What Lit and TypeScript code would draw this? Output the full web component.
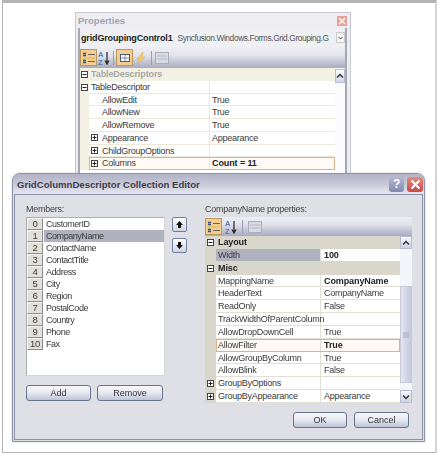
import { LitElement, html, css } from "lit";
import { customElement } from "lit/decorators.js";

const exp = (plus = true) => html`<svg class="ex" width="7" height="7" viewBox="0 0 7 7"><rect x=".5" y=".5" width="6" height="6" fill="#fff" stroke="#444"/><path d="M1.5 3.5h4${plus ? "M3.5 1.5v4" : ""}" stroke="#222"/></svg>`;
const catIcon = html`<svg width="14" height="14" viewBox="0 0 14 14"><path d="M1 2.5h3M1 4.5h3M1 9.5h3M1 11.5h3" stroke="#35507a" stroke-width="1.5"/><path d="M6 3.5h7M6 10.5h7" stroke="#666"/><path d="M1 7h12" stroke="#d8b860"/></svg>`;
const azIcon = html`<svg width="12" height="16" viewBox="0 0 12 16"><text x="0" y="7" class="az" fill="#5a7cb8">A</text><text x="0" y="15" class="az" fill="#5a7cb8">Z</text><path d="M9 2v11M7 10.5l2 3.5 2-3.5" stroke="#222" fill="none" stroke-width="1.2"/></svg>`;
const pageIcon = html`<svg width="14" height="14" viewBox="0 0 14 14"><rect x=".5" y="1.5" width="13" height="11" fill="#d8dae4" stroke="#a8adba"/><path d="M2 5h10M2 8h10" stroke="#b8bcc8"/></svg>`;
const gridIcon = html`<svg width="14" height="14" viewBox="0 0 14 14"><rect x="2.5" y="3.5" width="9" height="7" fill="#fff" stroke="#4a5a7a"/><path d="M2.5 7h9M7 3.5v7" stroke="#7a8aa8"/></svg>`;
const boltIcon = html`<svg width="14" height="16" viewBox="0 0 14 16"><path d="M10 2 4 9h3l-2 5 7-7H9z" fill="#f0d060" stroke="#e0a860" stroke-width=".6"/></svg>`;
const xIcon = html`<svg width="11" height="11" viewBox="0 0 11 11"><path d="M1.5 1.5l8 8M9.5 1.5l-8 8" stroke="#fff" stroke-width="2"/></svg>`;
const chev = (up: boolean) => html`<svg width="8" height="6" viewBox="0 0 8 6"><path d="${up ? "M1 4.5l3-3 3 3" : "M1 1.5l3 3 3-3"}" stroke="#333" stroke-width="1.5" fill="none"/></svg>`;

const members = ["CustomerID","CompanyName","ContactName","ContactTitle","Address","City","Region","PostalCode","Country","Phone","Fax"];

type Row = { k: string; v?: string; kind?: string; bold?: boolean; icon?: "plus" | "minus" };
const descRows: Row[] = [
  { k: "TableDescriptors", kind: "head", icon: "minus" },
  { k: "TableDescriptor", v: "", kind: "top", icon: "minus" },
  { k: "AllowEdit", v: "True", kind: "deep" },
  { k: "AllowNew", v: "True", kind: "deep" },
  { k: "AllowRemove", v: "True", kind: "deep" },
  { k: "Appearance", v: "Appearance", kind: "sub" },
  { k: "ChildGroupOptions", v: "", kind: "sub" },
  { k: "Columns", v: "Count = 11", kind: "sub hot", bold: true },
];
const propRows: Row[] = [
  { k: "Layout", kind: "head", icon: "minus" },
  { k: "Width", v: "100", kind: "sel", bold: true },
  { k: "Misc", kind: "head", icon: "minus" },
  { k: "MappingName", v: "CompanyName", bold: true },
  { k: "HeaderText", v: "CompanyName" },
  { k: "ReadOnly", v: "False" },
  { k: "TrackWidthOfParentColumn", v: "" },
  { k: "AllowDropDownCell", v: "True" },
  { k: "AllowFilter", v: "True", bold: true, kind: "hot" },
  { k: "AllowGroupByColumn", v: "True" },
  { k: "AllowBlink", v: "False" },
  { k: "GroupByOptions", v: "", icon: "plus" },
  { k: "GroupByAppearance", v: "Appearance", icon: "plus" },
];

const row = (r: Row, sub = false) => {
  const icon = r.icon ? exp(r.icon === "plus") : "";
  return r.kind === "head"
    ? html`<div class="row head"><div class="mg">${icon}</div><div class="nm">${r.k}</div></div>`
    : html`<div class="row ${r.kind ?? ""}"><div class="mg">${icon}</div><div class="cells"><div class="nm">${sub ? exp(true) : ""}<span>${r.k}</span></div><div class="vl ${r.bold ? "b" : ""}">${r.v}</div></div></div>`;
};

@customElement("app-root")
export class AppRoot extends LitElement {
  static styles = css`
    :host { display: block; width: 438px; height: 456px; overflow: hidden; font-family: "Liberation Sans", Arial, sans-serif; font-size: 9px; letter-spacing: -.25px; color: #3a3a3a; background: #fff; }
    svg { display: block; flex: none; }
    .az { font: bold 7.5px "Liberation Sans", sans-serif; letter-spacing: 0; }
    .page { filter: blur(.3px); margin-left: 2px; width: 435px; height: 453px; box-sizing: border-box; border: solid #b4b4b4; border-width: 3px 2px 1px 1px; border-right-color: #d4d4d4; }

    .props { margin: 9px 0 0 72px; width: 276px; height: 161px; box-sizing: border-box; border: 1px solid #c8c8d2; border-bottom: none; background: #eeeef2; display: flex; flex-direction: column; }
    .ptitle { height: 15px; flex: none; display: flex; align-items: center; justify-content: space-between; padding: 0 3px 0 2px; font-weight: bold; font-size: 9.5px; letter-spacing: 0; color: #a2a4ac; }
    .pclose { width: 10px; height: 10px; background: #e8a096; display: flex; align-items: center; justify-content: center; }
    .pclose svg { width: 8px; height: 8px; }
    .pbody { flex: 1; min-height: 0; border: solid #a6a8b4; border-width: 0 2px; background: #fff; margin: 0 3px 0 2px; display: flex; flex-direction: column; }
    .combo { height: 19px; flex: none; display: flex; align-items: center; gap: 5px; padding-left: 1px; background: #eef0f4; white-space: nowrap; overflow: hidden; position: relative; }
    .combo b { color: #222; letter-spacing: -.15px; }
    .combo span { color: #555; font-size: 8.4px; letter-spacing: -.4px; }
    .ddl { position: absolute; right: 0; top: 4px; width: 9px; height: 11px; background: #f4f4f4; border: 1px solid #ccc; box-sizing: border-box; display: flex; align-items: center; justify-content: center; }
    .ddl svg { width: 5px; height: 4px; }
    .tb { height: 21px; flex: none; display: flex; align-items: center; background: linear-gradient(#eeeef4, #e4e4ec 40%, #a8aabe); }
    .tb i, .rtb i { width: 1px; height: 14px; background: #9a9cb0; flex: none; }
    .tb .ic1 { margin-left: 1px; }
    .tb .s1 { margin: 0 2px 0 3px; }
    .tb .s2 { margin: 0 3px 0 4px; }
    .on { width: 17px; height: 17px; box-sizing: border-box; flex: none; background: #f6cd90; border: 1px solid #b89860; display: flex; align-items: center; justify-content: center; }
    .on svg { width: 14px; height: 14px; }
    .pgrid { flex: 1; min-height: 0; display: flex; }
    .pcols { flex: 1; min-width: 0; --m: 9px; --n: 121px; --h: 12.75px; --line: #ece9d8; --pale: #f3f1e4; --pad: 2px; --vp: 2px; }
    .psb { width: 10px; flex: none; background: #fbfbfd; }
    .sbtn { height: 12px; margin-top: 1px; border: 1px solid #b8bcd0; background: linear-gradient(#fff, #d0d4e4); display: flex; align-items: center; justify-content: center; }

    .row { height: var(--h); display: flex; white-space: nowrap; line-height: 12px; background: var(--pale); }
    .mg { width: var(--m); flex: none; display: flex; align-items: center; justify-content: center; }
    .cells { flex: 1; min-width: 0; display: grid; grid-template-columns: var(--n) 1fr; background: #fff; box-sizing: border-box; border-bottom: 1px solid var(--line); }
    .nm { display: flex; align-items: center; gap: 4px; padding-left: var(--pad); border-right: 1px solid var(--line); }
    .vl { padding-left: var(--vp); display: flex; align-items: center; }
    .b { font-weight: bold; color: #222; letter-spacing: -.1px; }
    .head .nm { font-weight: bold; letter-spacing: -.1px; border: none; padding-left: var(--pad); }
    .pcols .head .nm { color: #a8a8a8; }
    .deep .nm { padding-left: 13px; }
    .sub .nm { padding-left: 2px; }
    .hot .cells { outline: 1px solid #dfb08a; outline-offset: -1px; background: #fffaf4; }

    .dlg { margin-left: 9px; width: 413px; height: 269px; box-sizing: border-box; border: 1px solid #8f93a8; border-radius: 8px 8px 0 0; background: #dfe0e6; box-shadow: 0 0 2px #bbb; display: flex; flex-direction: column; }
    .dtitle { height: 20px; flex: none; display: flex; align-items: center; justify-content: space-between; padding: 0 1px 0 4px; border-radius: 7px 7px 0 0; background: linear-gradient(#b0b2c6, #c8c9d8 50%, #e6e6ee); }
    .dtitle b { font-size: 9.6px; letter-spacing: 0; color: #3c3e4c; }
    .wbtns { display: flex; gap: 3px; }
    .wb { width: 15px; height: 15px; border-radius: 3px; display: flex; align-items: center; justify-content: center; color: #fff; font: bold 12px "Liberation Sans", sans-serif; }
    .help { background: linear-gradient(#b4bad4, #8088ae); }
    .close { width: 16px; background: linear-gradient(#e88a80, #c64a48); }
    .dbody { flex: 1; min-height: 0; margin: 0 1px 1px; border: 1px solid #8e92a8; display: grid; grid-template-columns: 139px 40px 207px; grid-template-rows: 14px 1fr; padding: 8px 10px 0 11px; }
    .lbl { color: #444; line-height: 12px; }
    .left, .right { display: flex; flex-direction: column; }
    .list { height: 159px; box-sizing: border-box; background: #fff; border: 1px solid #b0b0b0; border-right-color: #d8d8d8; border-bottom-color: #d8d8d8; }
    .m { height: 12px; display: flex; align-items: center; gap: 1px; }
    .m u { width: 16px; height: 12px; box-sizing: border-box; text-decoration: none; text-align: center; line-height: 10px; background: #e2e0d8; border: 1px solid; border-color: #f4f4f4 #8c8c8c #8c8c8c #f4f4f4; font-size: 9.5px; flex: none; }
    .m span { flex: 1; line-height: 12px; padding-left: 2px; letter-spacing: -.45px; }
    .m.sel span { background: #b0b2c0; }
    .btns { display: flex; gap: 6px; margin-top: 9px; }
    .btn { height: 16px; box-sizing: border-box; border: 1px solid #66768f; border-radius: 3px; background: linear-gradient(#f8f9fc, #e6e8f0 50%, #bcc5d8); text-align: center; line-height: 14px; letter-spacing: 0; color: #333; }
    .add { width: 65px; }
    .rem { width: 66px; }
    .okb { width: 54px; }
    .can { width: 55px; }
    .arrows { display: flex; flex-direction: column; gap: 6px; padding-left: 7px; }
    .ar { width: 15px; height: 15px; box-sizing: border-box; border: 1px solid #7080a0; border-radius: 2px; background: linear-gradient(#fff, #cfd4e2); display: flex; align-items: center; justify-content: center; }
    .rgrid { height: 186px; display: flex; flex-direction: column; background: #d9d6cc; }
    .rtb { height: 19px; flex: none; display: flex; align-items: center; background: linear-gradient(#eeeff5, #e0e1ea 40%, #a8aac0); }
    .rtb .az2 { margin-left: 3px; }
    .rtb i { margin: 0 5px; }
    .rbody { flex: 1; min-height: 0; display: flex; }
    .rcols { flex: 1; min-width: 0; --m: 11px; --n: 105px; --h: 12.85px; --line: #e2e0d6; --pale: #d9d6cc; --pad: 2px; --vp: 3px; }
    .rcols .head .nm { color: #222; }
    .sel .cells { border-bottom-color: #d9d6cc; }
    .sel .nm { background: #b0b2c0; }
    .rsb { width: 12px; flex: none; background: #f4f5fa; display: flex; flex-direction: column; }
    .thumb { margin: 37px 0 7px; flex: 1; background: linear-gradient(90deg, #e4e6f2, #c4c8dc); border: 1px solid #c8cad8; display: flex; align-items: center; justify-content: center; }
    .sb2 { height: 13px; box-sizing: border-box; flex: none; border: 1px solid #b8bcd0; background: linear-gradient(#f8f8fc, #cdd1e2); display: flex; align-items: center; justify-content: center; }
    .ok { display: flex; justify-content: flex-end; gap: 7px; margin-top: 9px; padding-right: 3px; }
  `;

  render() {
    return html`<div class="page">
      <div class="props">
        <div class="ptitle"><span>Properties</span><div class="pclose">${xIcon}</div></div>
        <div class="pbody">
          <div class="combo"><b>gridGroupingControl1</b><span>Syncfusion.Windows.Forms.Grid.Grouping.G</span><div class="ddl">${chev(false)}</div></div>
          <div class="tb"><div class="on">${catIcon}</div><div class="ic1">${azIcon}</div><i class="s1"></i><div class="on">${gridIcon}</div>${boltIcon}<i class="s2"></i>${pageIcon}</div>
          <div class="pgrid">
            <div class="pcols">${descRows.map((r) => row(r, (r.kind ?? "").startsWith("sub")))}</div>
            <div class="psb"><div class="sbtn">${chev(true)}</div></div>
          </div>
        </div>
      </div>
      <div class="dlg">
        <div class="dtitle"><b>GridColumnDescriptor Collection Editor</b><div class="wbtns"><div class="wb help">?</div><div class="wb close">${xIcon}</div></div></div>
        <div class="dbody">
          <div class="lbl">Members:</div>
          <div></div>
          <div class="lbl">CompanyName properties:</div>
          <div class="left">
            <div class="list">
              ${members.map((m, i) => html`<div class="m ${i === 1 ? "sel" : ""}"><u>${i}</u><span>${m}</span></div>`)}
            </div>
            <div class="btns"><div class="btn add">Add</div><div class="btn rem">Remove</div></div>
          </div>
          <div class="arrows">
            <div class="ar"><svg width="9" height="9" viewBox="0 0 9 9"><path d="M4.5 1 8 5H6v3H3V5H1z" fill="#111"/></svg></div>
            <div class="ar"><svg width="9" height="9" viewBox="0 0 9 9"><path d="M4.5 8 8 4H6V1H3v3H1z" fill="#111"/></svg></div>
          </div>
          <div class="right">
            <div class="rgrid">
              <div class="rtb"><div class="on">${catIcon}</div><div class="az2">${azIcon}</div><i></i>${pageIcon}</div>
              <div class="rbody">
                <div class="rcols">${propRows.map((r) => row(r))}</div>
                <div class="rsb"><div class="sb2">${chev(true)}</div><div class="thumb"><svg width="6" height="6" viewBox="0 0 6 6"><path d="M0 1h6M0 3h6M0 5h6" stroke="#aab"/></svg></div><div class="sb2">${chev(false)}</div></div>
              </div>
            </div>
            <div class="ok"><div class="btn okb">OK</div><div class="btn can">Cancel</div></div>
          </div>
        </div>
      </div>
    </div>`;
  }
}
